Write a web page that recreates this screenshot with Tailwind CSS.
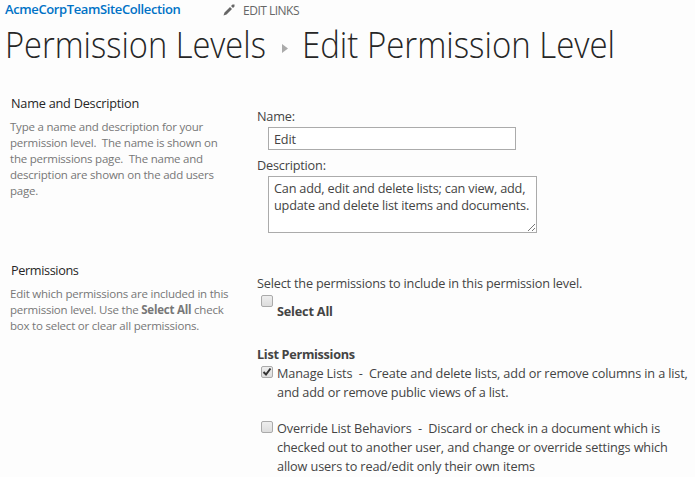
<!DOCTYPE html>
<html lang="en"><head><meta charset="utf-8"><title>Edit Permission Level</title>
<script src="https://cdn.jsdelivr.net/npm/@tailwindcss/browser@4"></script></head>
<body class="w-[695px] h-[477px] overflow-hidden bg-[#fdfdfd] text-[#444] text-[12.7px] tracking-[-0.19px] font-['Open_Sans','Noto_Sans',sans-serif]">
<header class="pl-[5px] h-[94px] whitespace-nowrap">
<nav class="flex h-5 items-center"><a class="w-[218px] text-[13px] font-semibold tracking-[-0.38px] text-[#0072c6]">AcmeCorpTeamSiteCollection</a><svg class="w-3 h-3" viewBox="0 0 12 12" fill="#666"><path d="M0.500 11.500 1.500 8.500 7 3 9 5 3.500 10.500ZM8 2 9.500 .5 11.500 .5V2.500L10 4Z"/></svg><span class="ml-2 pt-px text-[12px] text-[#666] tracking-[-0.5px]">EDIT LINKS</span></nav>
<h1 class="flex items-center h-[50px] text-[36px] font-light text-[#262626] tracking-normal"><span class="w-[261px] origin-left scale-x-[.907]">Permission Levels</span><svg class="w-[6px] h-[9px] ml-4 mr-[14px] mt-[6px]" viewBox="0 0 6 9"><path d="M0 0 6 4.500 0 9Z" fill="#aaa"/></svg><span class="w-[313px] origin-left scale-x-[.916]">Edit Permission Level</span></h1>
</header>
<main class="flex">
<aside class="w-[257px] shrink-0 pl-[10px] text-[11.5px] tracking-[-0.22px] leading-4 text-[#777]">
<section class="h-[167px]"><h2 class="pl-px h-[25px] leading-[18px] text-[12.7px] text-[#262626]">Name and Description</h2><p class="whitespace-pre">Type a name and description for your
permission level.  The name is shown on
the permissions page.  The name and
description are shown on the add users
page.</p></section>
<section><h2 class="pl-px h-[25px] leading-[18px] text-[12.7px] tracking-[-0.38px] text-[#262626]">Permissions</h2><p class="whitespace-pre">Edit which permissions are included in this
permission level. Use the <b>Select All</b> check
box to select or clear all permissions.</p></section>
</aside>
<section class="flex-1 pt-3">
<label class="block h-[21px] leading-5">Name:</label>
<div class="ml-[11px] w-[248px] h-[23px] border border-[#ababab] bg-white pl-[5px] leading-[23px]">Edit</div>
<label class="block h-[26px] pt-[5px] leading-5">Description:</label>
<div class="relative ml-[11px] w-[269px] h-[57px] border border-[#ababab] bg-white pl-[5px] pt-[3px] leading-[17px] whitespace-pre">Can add, edit and delete lists; can view, add,
update and delete list items and documents.<svg class="absolute right-0 bottom-0 w-[9px] h-[9px]" viewBox="0 0 9 9" stroke="#777"><path d="M1 8 8 1M5 8 8 5"/></svg></div>
<p class="pt-[41px] h-[60px] leading-[19px]">Select the permissions to include in this permission level.</p>
<div class="flex h-[52px]"><i class="ml-1 mt-[2px] mr-1 size-3 rounded-[2px] border border-[#aaa] bg-linear-to-b from-[#eee] to-[#ddd]"></i><b class="pt-[9px] leading-[19px]">Select All</b></div>
<h3 class="font-bold leading-[19px] tracking-[-0.31px]">List Permissions</h3>
<div class="flex h-[55px] tracking-[-0.14px]"><svg class="ml-1 mt-[2px] mr-1 size-3 rounded-[2px] border border-[#aaa] bg-linear-to-b from-[#eee] to-[#ddd]" viewBox="0 0 10 10" fill="none" stroke="#333" stroke-width="2"><path d="M1.500 5 4 7.500 8.500 1.500"/></svg><p class="leading-[19px] whitespace-pre">Manage Lists  -  Create and delete lists, add or remove columns in a list,
and add or remove public views of a list.</p></div>
<div class="flex tracking-[-0.12px]"><i class="ml-1 mt-[2px] mr-1 size-3 rounded-[2px] border border-[#aaa] bg-linear-to-b from-[#eee] to-[#ddd]"></i><p class="leading-[19px] whitespace-pre">Override List Behaviors  -  Discard or check in a document which is
checked out to another user, and change or override settings which
allow users to read/edit only their own items</p></div>
</section>
</main>
</body></html>
